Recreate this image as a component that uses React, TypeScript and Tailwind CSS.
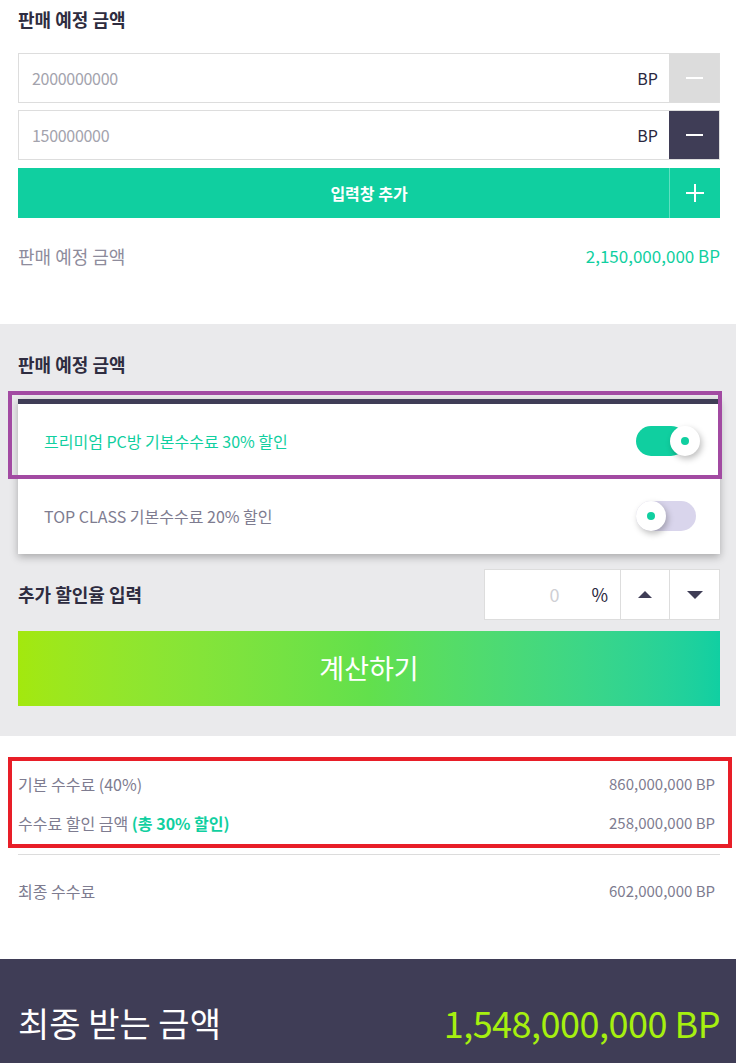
import React from "react";

const font = { fontFamily: '"Noto Sans CJK KR", "Noto Sans", sans-serif' };

function Minus({ dark }: { dark?: boolean }) {
  return (
    <div className={`w-[50px] h-full flex items-center justify-center ${dark ? "bg-[#3f3d56]" : "bg-[#dcdcdc]"}`}>
      <div className="w-[17px] h-[2px] bg-white" />
    </div>
  );
}

function InputRow({ value, dark }: { value: string; dark?: boolean }) {
  return (
    <div className="flex h-[50px] border border-[#dddddd] bg-white">
      <div className="flex-1 flex items-center pl-[13px] pr-[11px]">
        <span className="flex-1 text-[16px] text-[#a3a3ad] tracking-[-0.3px]">{value}</span>
        <span className="text-[16px] text-[#2a2840]">BP</span>
      </div>
      <Minus dark={dark} />
    </div>
  );
}

function Toggle({ on }: { on: boolean }) {
  if (on) {
    return (
      <div className="relative w-[64px] h-[30px]">
        <div className="absolute left-0 top-0 w-[50px] h-[30px] rounded-full bg-[#10cfa0]" />
        <div className="absolute left-[34px] top-0 w-[30px] h-[30px] rounded-full bg-white shadow-[2px_3px_6px_rgba(0,0,0,0.25)] flex items-center justify-center">
          <div className="w-[8px] h-[8px] rounded-full bg-[#10cfa0]" />
        </div>
      </div>
    );
  }
  return (
    <div className="relative w-[60px] h-[30px]">
      <div className="absolute left-0 top-0 w-[60px] h-[30px] rounded-full bg-[#d9d5ec]" />
      <div className="absolute left-0 top-0 w-[30px] h-[30px] rounded-full bg-white shadow-[2px_3px_6px_rgba(0,0,0,0.25)] flex items-center justify-center">
        <div className="w-[8px] h-[8px] rounded-full bg-[#10cfa0]" />
      </div>
    </div>
  );
}

export default function App() {
  return (
    <div className="relative w-[736px] bg-white overflow-hidden" style={font}>
      {/* Section 1 */}
      <div className="pl-[18px] pr-[16px] pt-[8px] pb-[50px]">
        <div className="h-[22px] leading-[22px] text-[18px] font-bold text-[#2e2c40]">판매 예정 금액</div>
        <div className="mt-[23px] flex flex-col gap-[7px]">
          <InputRow value="2000000000" />
          <InputRow value="150000000" dark />
        </div>
        <div className="mt-[8px] relative flex h-[50px] bg-[#10cfa0]">
          <div className="absolute inset-0 flex items-center justify-center text-white text-[16px] font-bold">입력창 추가</div>
          <div className="flex-1" />
          <div className="relative w-[51px] border-l border-[#5fe0c0] flex items-center justify-center">
            <div className="absolute w-[18px] h-[2px] bg-white" />
            <div className="absolute w-[2px] h-[18px] bg-white" />
          </div>
        </div>
        <div className="mt-[20px] h-[36px] flex items-center justify-between">
          <span className="text-[18px] text-[#8e8c9c]">판매 예정 금액</span>
          <span className="text-[17px] text-[#10cfa0]">2,150,000,000 BP</span>
        </div>
      </div>

      {/* Section 2 gray */}
      <div className="bg-[#eaeaec] pl-[18px] pr-[16px] pt-[29px] pb-[30px]">
        <div className="h-[22px] leading-[22px] text-[18px] font-bold text-[#2e2c40]">판매 예정 금액</div>
        <div className="mt-[24px] bg-white border-t-[5px] border-[#3f3d56] shadow-[0_3px_8px_rgba(0,0,0,0.28)]">
          <div className="h-[74px] flex items-center justify-between pl-[26px] pr-[20px]">
            <span className="text-[16px] text-[#10cfa0]">프리미엄 PC방 기본수수료 30% 할인</span>
            <Toggle on />
          </div>
          <div className="h-[76px] flex items-center justify-between pl-[26px] pr-[24px]">
            <span className="text-[16px] text-[#7e7c90]">TOP CLASS 기본수수료 20% 할인</span>
            <Toggle on={false} />
          </div>
        </div>
        <div className="mt-[15px] flex items-center justify-between">
          <span className="text-[18px] font-bold text-[#2e2c40]">추가 할인율 입력</span>
          <div className="flex h-[51px] w-[236px] bg-white border border-[#dddddd]">
            <div className="w-[135px] flex items-center justify-end pr-[12px] gap-[32px]">
              <span className="text-[18px] text-[#cfcfd4]">0</span>
              <span className="text-[18px] text-[#2a2840]">%</span>
            </div>
            <div className="w-[49px] border-l border-[#dddddd] flex items-center justify-center">
              <div className="w-0 h-0 border-l-[7px] border-r-[7px] border-b-[7px] border-l-transparent border-r-transparent border-b-[#3f3d56]" />
            </div>
            <div className="flex-1 border-l border-[#dddddd] flex items-center justify-center">
              <div className="w-0 h-0 border-l-[8px] border-r-[8px] border-t-[8px] border-l-transparent border-r-transparent border-t-[#3f3d56]" />
            </div>
          </div>
        </div>
        <div className="mt-[11px] h-[75px] bg-gradient-to-r from-[#a3e80d] via-[#62e04c] to-[#10cfa2] flex items-center justify-center">
          <span className="text-white text-[27px]">계산하기</span>
        </div>
      </div>

      {/* Section 3 results */}
      <div className="pl-[18px] pr-[16px] pt-[35px] pb-[55px]">
        <div className="pr-[5px]">
          <div className="h-[26px] flex items-center justify-between text-[#7e7c90]">
            <span className="text-[16px]">기본 수수료 (40%)</span>
            <span className="text-[15px]">860,000,000 BP</span>
          </div>
          <div className="mt-[13px] h-[26px] flex items-center justify-between text-[#7e7c90]">
            <span className="text-[16px]">
              수수료 할인 금액 <span className="text-[#10cfa0] font-bold">(총 30% 할인)</span>
            </span>
            <span className="text-[15px]">258,000,000 BP</span>
          </div>
        </div>
        <div className="mt-[18px] h-px bg-[#dcdcdc]" />
        <div className="mt-[23px] pr-[5px] h-[26px] flex items-center justify-between text-[#7e7c90]">
          <span className="text-[16px]">최종 수수료</span>
          <span className="text-[15px]">602,000,000 BP</span>
        </div>
      </div>

      {/* Footer */}
      <div className="bg-[#3f3d56] h-[120px] pl-[18px] pr-[16px] pt-[38px]">
        <div className="h-[50px] flex items-center justify-between">
          <span className="text-white text-[34px]">최종 받는 금액</span>
          <span className="text-[#a6f00f] text-[36px] tracking-[-0.5px]">1,548,000,000 BP</span>
        </div>
      </div>

      {/* Annotation overlays */}
      <div className="absolute left-[8px] top-[391px] w-[714px] h-[88px] border-[4px] border-[#a24aa2] pointer-events-none" />
      <div className="absolute left-[8px] top-[757px] w-[724px] h-[91px] border-[4px] border-[#e81e28] pointer-events-none" />
    </div>
  );
}
